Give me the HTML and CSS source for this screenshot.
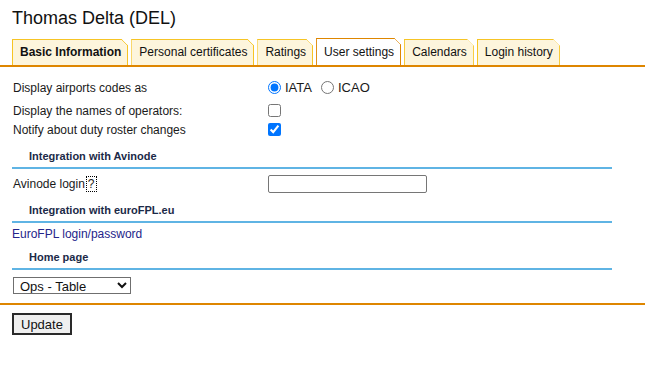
FILE: index.html
```html
<!DOCTYPE html>
<html lang="en">

<head>
  <meta charset="UTF-8">
  <title>Thomas Delta (DEL)</title>
  <link rel="stylesheet" href="styles.css">
</head>

<body>
  <h1 class="page-title">Thomas Delta (DEL)</h1>

  <ul class="tabs">
    <li class="tab tab-bold">Basic Information</li>
    <li class="tab">Personal certificates</li>
    <li class="tab">Ratings</li>
    <li class="tab active">User settings</li>
    <li class="tab">Calendars</li>
    <li class="tab">Login history</li>
  </ul>

  <form class="settings">
    <div class="settings-body">
      <div class="row row-first">
        <div class="label">Display airports codes as</div>
        <div class="control">
          <label class="radio"><input type="radio" name="codes" checked> IATA</label>
          <label class="radio"><input type="radio" name="codes"> ICAO</label>
        </div>
      </div>
      <div class="row row-check">
        <div class="label">Display the names of operators:</div>
        <div class="control"><input type="checkbox"></div>
      </div>
      <div class="row row-check">
        <div class="label">Notify about duty roster changes</div>
        <div class="control"><input type="checkbox" checked></div>
      </div>

      <div class="section-head head-avinode">Integration with Avinode</div>
      <div class="row row-input">
        <div class="label">Avinode login<span class="help">?</span></div>
        <div class="control"><input type="text" class="text-input"></div>
      </div>

      <div class="section-head head-eurofpl">Integration with euroFPL.eu</div>
      <div class="row row-link">
        <a href="#" class="link">EuroFPL login/password</a>
      </div>

      <div class="section-head head-home">Home page</div>
      <div class="row row-select">
        <select class="select">
          <option>Ops - Table</option>
        </select>
      </div>
    </div>

    <div class="actions">
      <button type="button" class="update-button">Update</button>
    </div>
  </form>
</body>

</html>
```

FILE: styles.css
```css
* {
  box-sizing: border-box;
}

body {
  margin: 0;
  font-family: 'Liberation Sans', Arial, sans-serif;
  font-size: 12px;
  color: #1a1a1a;
  background: #fff;
}

.page-title {
  margin: 0;
  padding: 7px 12px 0;
  font-size: 18px;
  line-height: 22px;
  font-weight: normal;
  color: #111;
}

/* Tabs */
.tabs {
  list-style: none;
  margin: 9px 0 0;
  padding: 0 0 0 12px;
  display: flex;
  align-items: flex-end;
  gap: 3px;
  border-bottom: 2px solid #de8600;
}

.tab {
  position: relative;
  height: 26px;
  line-height: 25px;
  padding: 0 6px 0 7px;
  background: #fdf5dc;
  border: 1px solid #f6c425;
  border-bottom: none;
  color: #111;
  clip-path: polygon(0 0, calc(100% - 7px) 0, 100% 7px, 100% 100%, 0 100%);
}

/* folded corner */
.tab::after {
  content: "";
  position: absolute;
  top: -1px;
  right: -1px;
  width: 7px;
  height: 7px;
  background: linear-gradient(to bottom left, transparent calc(50% - 1px), #f6c425 calc(50% - 1px), #f6c425 calc(50% + 0.5px), transparent calc(50% + 0.5px));
}

.tab-bold {
  font-weight: bold;
}

.tab.active {
  height: 27px;
  line-height: 26px;
  background: #fff;
  border-color: #de8600;
}

.tab.active::after {
  background: linear-gradient(to bottom left, transparent calc(50% - 1px), #de8600 calc(50% - 1px), #de8600 calc(50% + 0.5px), transparent calc(50% + 0.5px));
}

/* Settings form */
.settings-body {
  width: 100%;
  padding: 9px 0 9px 12px;
  border-bottom: 2px solid #de8600;
}

.row {
  display: flex;
  align-items: center;
  width: 600px;
  padding-left: 1px;
}

.label {
  width: 255px;
  flex-shrink: 0;
}

.control {
  display: flex;
  align-items: center;
}

.row-first {
  height: 23px;
  margin-bottom: 2px;
}

.row-check {
  height: 19px;
}

.radio {
  display: flex;
  align-items: center;
  gap: 4px;
  margin-right: 9px;
  font-size: 13px;
}

input[type="radio"],
input[type="checkbox"] {
  margin: 0;
  width: 13px;
  height: 13px;
}

.section-head {
  width: 600px;
  padding: 0 0 4px 17px;
  line-height: 13px;
  font-size: 11px;
  font-weight: bold;
  color: #1b2a48;
  border-bottom: 2px solid #5fb4e4;
}

.head-avinode {
  margin-top: 11px;
}

.head-eurofpl {
  margin-top: 9px;
}

.head-home {
  margin-top: 6px;
}

.row-input {
  height: 22px;
  margin-top: 4px;
}

.help {
  display: inline-block;
  margin-left: 1px;
  padding: 0 1px;
  line-height: 14px;
  border: 1px dotted #000;
}

.text-input {
  width: 159px;
  height: 18px;
  padding: 0 3px;
  border: 1px solid #767676;
  border-radius: 2px;
  font: inherit;
}

.row-link {
  height: 22px;
  padding-left: 0;
}

.link {
  color: #24248a;
  text-decoration: none;
}

.row-select {
  margin-top: 7px;
}

.select {
  width: 118px;
  height: 17px;
  padding: 0 0 0 2px;
  border: 1px solid #6f6f6f;
  border-radius: 0;
  background: #fff;
  font: inherit;
  font-size: 13px;
  color: #111;
}

.actions {
  padding: 8px 12px;
}

.update-button {
  height: 22px;
  padding: 0 7px;
  border: 2px solid #2a2a2a;
  border-radius: 0;
  background: #efefef;
  font: inherit;
  font-size: 13px;
  color: #111;
}
```
